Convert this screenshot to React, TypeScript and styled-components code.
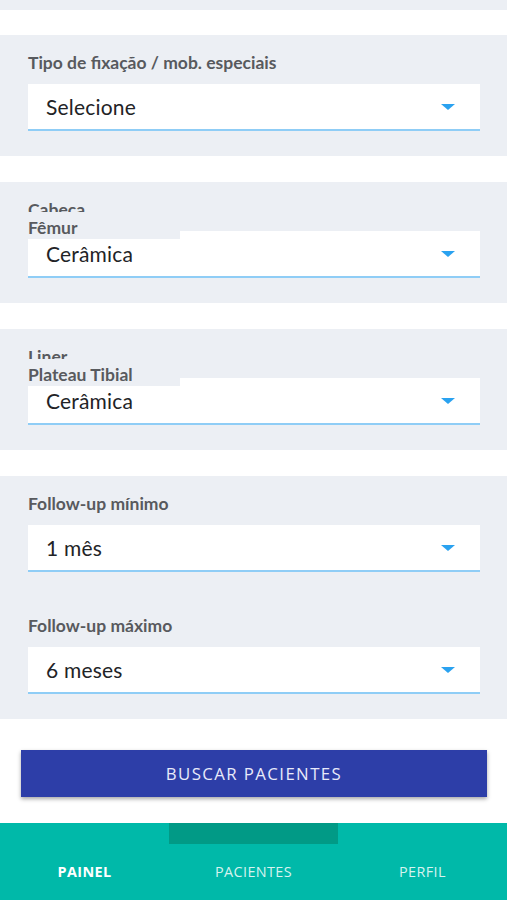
import React from "react";
import styled, { createGlobalStyle } from "styled-components";

const GlobalStyle = createGlobalStyle`
	body {
		margin: 0;
		background: #ffffff;
		font-family: Lato, "Open Sans", sans-serif;
	}
`;

const Page = styled.div`
	display: flex;
	flex-direction: column;
	width: 507px;
	height: 900px;
	overflow: hidden;
	background: #ffffff;
`;

const TopStrip = styled.div`
	height: 10px;
	margin-bottom: -1px;
	background: #eceff4;
`;

const Section = styled.div`
	position: relative;
	margin-top: 26px;
	padding: 18px 27px 25px 28px;
	background: #eceff4;
	display: flex;
	flex-direction: column;
`;

const Field = styled.div<{ $first?: boolean }>`
	display: flex;
	flex-direction: column;
	margin-top: ${(p) => (p.$first ? "0" : "44px")};
`;

const Label = styled.div`
	font-family: Lato, sans-serif;
	font-weight: 700;
	font-size: 17.5px;
	line-height: 19px;
	height: 19px;
	color: #585a5e;
	margin-bottom: 12px;
	white-space: nowrap;
`;

const OverLabel = styled.div`
	position: absolute;
	left: 28px;
	top: 30px;
	width: 152px;
	height: 27px;
	background: #eceff4;
	font-family: Lato, sans-serif;
	font-weight: 700;
	font-size: 17.5px;
	line-height: 19px;
	color: #585a5e;
	padding-top: 6px;
	box-sizing: border-box;
	white-space: nowrap;
`;

const Select = styled.div`
	height: 47px;
	box-sizing: border-box;
	background: #ffffff;
	border-bottom: 2px solid #8fcdf6;
	display: flex;
	align-items: center;
	justify-content: space-between;
	padding: 0 25px 1px 18px;
`;

const Value = styled.span`
	font-family: Lato, sans-serif;
	font-size: 21px;
	color: #222326;
	letter-spacing: 0.2px;
`;

const Arrow = styled.span`
	width: 0;
	height: 0;
	border-left: 7px solid transparent;
	border-right: 7px solid transparent;
	border-top: 6px solid #2aa2f0;
	margin-top: 2px;
`;

const ButtonWrap = styled.div`
	padding: 31px 20px 26px 21px;
`;

const SearchButton = styled.button`
	width: 100%;
	height: 47px;
	border: none;
	background: #2d3ea8;
	color: #e8eafa;
	font-family: "Open Sans", sans-serif;
	font-size: 16.8px;
	letter-spacing: 1.4px;
	box-shadow: 0 2px 4px rgba(0, 0, 0, 0.35);
`;

const Nav = styled.div`
	flex: 1;
	display: grid;
	grid-template-columns: 1fr 1fr 1fr;
	background: #00b9a9;
`;

const NavItem = styled.div`
	display: flex;
	flex-direction: column;
	align-items: center;
`;

const Indicator = styled.div<{ $on: boolean }>`
	width: 100%;
	height: 21px;
	background: ${(p) => (p.$on ? "#019a86" : "transparent")};
`;

const NavLabel = styled.div<{ $active: boolean }>`
	margin-top: 18px;
	font-family: "Open Sans", sans-serif;
	font-size: 14.4px;
	font-weight: ${(p) => (p.$active ? 700 : 400)};
	color: ${(p) => (p.$active ? "#ffffff" : "#d6f3ef")};
	letter-spacing: 0.4px;
`;

const Dropdown = ({ value }: { value: string }) => (
	<Select>
		<Value>{value}</Value>
		<Arrow />
	</Select>
);

export default function App() {
	return (
		<Page>
			<GlobalStyle />
			<TopStrip />
			<Section>
				<Field $first>
					<Label>Tipo de fixação / mob. especiais</Label>
					<Dropdown value="Selecione" />
				</Field>
			</Section>
			<Section>
				<Field $first>
					<Label>Cabeça</Label>
					<Dropdown value="Cerâmica" />
				</Field>
				<OverLabel>Fêmur</OverLabel>
			</Section>
			<Section>
				<Field $first>
					<Label>Liner</Label>
					<Dropdown value="Cerâmica" />
				</Field>
				<OverLabel>Plateau Tibial</OverLabel>
			</Section>
			<Section>
				<Field $first>
					<Label>Follow-up mínimo</Label>
					<Dropdown value="1 mês" />
				</Field>
				<Field>
					<Label>Follow-up máximo</Label>
					<Dropdown value="6 meses" />
				</Field>
			</Section>
			<ButtonWrap>
				<SearchButton>BUSCAR PACIENTES</SearchButton>
			</ButtonWrap>
			<Nav>
				<NavItem>
					<Indicator $on={false} />
					<NavLabel $active>PAINEL</NavLabel>
				</NavItem>
				<NavItem>
					<Indicator $on />
					<NavLabel $active={false}>PACIENTES</NavLabel>
				</NavItem>
				<NavItem>
					<Indicator $on={false} />
					<NavLabel $active={false}>PERFIL</NavLabel>
				</NavItem>
			</Nav>
		</Page>
	);
}
